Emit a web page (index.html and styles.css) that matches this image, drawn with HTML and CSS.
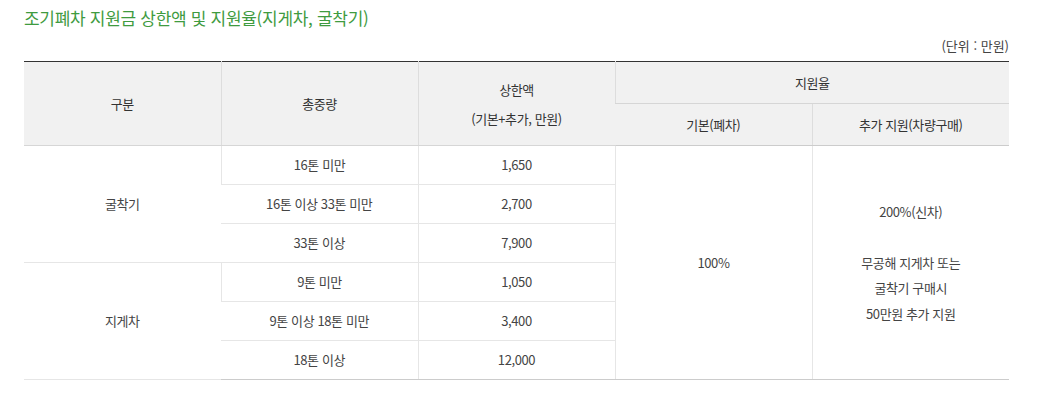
FILE: index.html
```html
<!DOCTYPE html>
<html lang="ko">
<head>
<meta charset="utf-8">
<title>조기폐차 지원금 상한액 및 지원율</title>
<link rel="stylesheet" href="styles.css">
</head>
<body>
<div class="wrap">
  <h3 class="title">조기폐차 지원금 상한액 및 지원율(지게차, 굴착기)</h3>
  <p class="unit">(단위 : 만원)</p>
  <table class="tbl">
    <colgroup>
      <col class="c1"><col class="c2"><col class="c3"><col class="c4"><col class="c5">
    </colgroup>
    <thead>
      <tr class="h1">
        <th rowspan="2">구분</th>
        <th rowspan="2">총중량</th>
        <th rowspan="2" class="two">상한액<br>(기본+추가, 만원)</th>
        <th colspan="2">지원율</th>
      </tr>
      <tr class="h2">
        <th>기본(폐차)</th>
        <th>추가 지원(차량구매)</th>
      </tr>
    </thead>
    <tbody>
      <tr>
        <td rowspan="3">굴착기</td>
        <td>16톤 미만</td>
        <td>1,650</td>
        <td rowspan="6">100%</td>
        <td rowspan="6" class="multi">200%(신차)<br><br>무공해 지게차 또는<br>굴착기 구매시<br>50만원 추가 지원</td>
      </tr>
      <tr>
        <td>16톤 이상 33톤 미만</td>
        <td>2,700</td>
      </tr>
      <tr>
        <td>33톤 이상</td>
        <td>7,900</td>
      </tr>
      <tr>
        <td rowspan="3">지게차</td>
        <td>9톤 미만</td>
        <td>1,050</td>
      </tr>
      <tr>
        <td>9톤 이상 18톤 미만</td>
        <td>3,400</td>
      </tr>
      <tr>
        <td>18톤 이상</td>
        <td>12,000</td>
      </tr>
    </tbody>
  </table>
</div>
</body>
</html>
```
FILE: styles.css
```css
html, body {
  margin: 0;
  padding: 0;
  background: #fff;
}
body {
  font-family: "Noto Sans CJK KR", "Noto Sans", sans-serif;
  color: #444;
}
.wrap {
  padding: 6px 39px 0 24px;
}
.title {
  margin: 0;
  font-size: 17px;
  line-height: 24px;
  font-weight: 400;
  color: #3f9b3f;
  letter-spacing: -0.3px;
}
.unit {
  margin: 6px 0 5px;
  text-align: right;
  font-size: 13px;
  line-height: 20px;
  color: #444;
  letter-spacing: 0;
}
.tbl {
  width: 100%;
  border-collapse: collapse;
  table-layout: fixed;
  border-top: 1px solid #333;
  border-bottom: 1px solid #ccc;
  font-size: 13px;
  letter-spacing: -0.4px;
}
.tbl th,
.tbl td {
  text-align: center;
  vertical-align: middle;
  padding: 0;
  font-weight: 400;
}
.tbl th {
  background: #f1f1f1;
  color: #333;
  height: 41px;
  border-left: 1px solid #ddd;
  border-bottom: 1px solid #d6d6d6;
}
.tbl thead tr.h2 th {
  border-bottom: 1px solid #ccc;
}
.tbl th.two {
  line-height: 29px;
}
.tbl td {
  height: 38px;
  border-left: 1px solid #e6e6e6;
  border-bottom: 1px solid #e6e6e6;
  line-height: 20px;
}
.tbl tr > :first-child {
  border-left: none;
}
.tbl tbody tr:last-child td,
.tbl td[rowspan="6"] {
  border-bottom: 1px solid #ccc;
}
.tbl td.multi {
  line-height: 25.5px;
}
```
